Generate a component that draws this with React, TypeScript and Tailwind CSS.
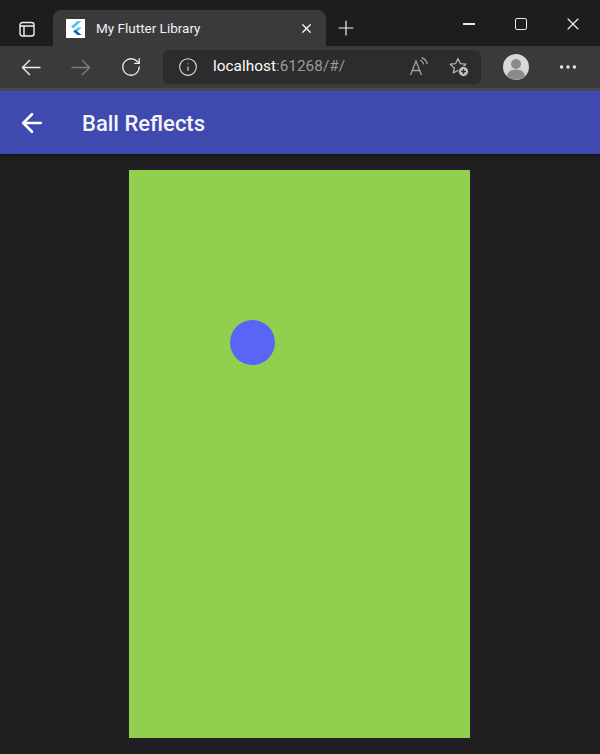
import { ArrowLeft, Info, MoreHorizontal, Plus, RotateCw, X } from 'lucide-react';

const font = { sans: 'font-["Open_Sans","Liberation_Sans",sans-serif]' };

function TabsIcon() {
  return (
    <svg width="16" height="16" viewBox="0 0 16 16" fill="none" stroke="#f0f0f0" strokeWidth="1.4">
      <rect x="1" y="1.5" width="14" height="13.5" rx="2.5" />
      <path d="M1 5h14M5 5v10" />
    </svg>
  );
}

function FlutterLogo() {
  return (
    <svg width="12" height="14" viewBox="0 0 12 14">
      <path d="M7.5 0H11.5L3.2 7.5 1 5.6Z" fill="#4fc3f7" />
      <path d="M7.4 6.5h4.1L7.5 10.4 5.4 8.4Z" fill="#4fc3f7" />
      <path d="M5.4 8.4 7.5 10.4 11.5 14H7.5L3.3 10.4Z" fill="#0d5fa8" />
    </svg>
  );
}

function ToolbarArrow({ color, flip }: { color: string; flip?: boolean }) {
  return (
    <svg width="20" height="17" viewBox="0 0 20 17" fill="none" stroke={color} strokeWidth="1.4" className={flip ? 'rotate-180' : ''}>
      <path d="M1.5 8.5H19.5M9 1 1.5 8.5 9 16" />
    </svg>
  );
}

function ReadAloudIcon() {
  return (
    <svg width="20" height="20" viewBox="0 0 20 20" fill="none" stroke="#a2a2a2" strokeWidth="1.3">
      <path d="M1.5 18 7 4l5.5 14M3.4 13.5h7.2" />
      <path d="M11 3c2 .8 3.2 2.3 3.6 4.3M12.6 .6c3 1 5 3.4 5.6 6.6" />
    </svg>
  );
}

function FavoriteAddIcon() {
  return (
    <svg width="22" height="20" viewBox="0 0 22 20" fill="none">
      <path
        d="M10 1.5 12.3 6.6 17.8 7.2 13.7 10.9 14.8 16 10 13.4 5.2 16 6.4 10.9 2.2 7.2 7.7 6.6Z"
        stroke="#b0b0b0"
        strokeWidth="1.3"
        strokeLinejoin="round"
      />
      <circle cx="15.5" cy="14.5" r="5" fill="#c4c4c4" stroke="#333335" strokeWidth="1" />
      <path d="M15.5 12v5M13 14.5h5" stroke="#2d2d2f" strokeWidth="1.3" />
    </svg>
  );
}

function Avatar() {
  return (
    <svg width="26" height="26" viewBox="0 0 26 26">
      <circle cx="13" cy="13" r="13" fill="#d8d8d8" />
      <circle cx="13" cy="10" r="5" fill="#8b8b8b" />
      <path d="M3.8 22c1-4.5 4.6-6.5 9.2-6.5s8.2 2 9.2 6.5a13 13 0 0 1-18.4 0Z" fill="#8b8b8b" />
    </svg>
  );
}

export default function App() {
  return (
    <div className={`flex h-[754px] w-[600px] flex-col overflow-hidden bg-[#201f21] ${font.sans}`}>
      {/* window title bar */}
      <div className="flex h-[46px] items-end bg-[#1d1d1f]">
        <div className="flex h-[36px] w-[53px] items-center justify-center pt-[1px]">
          <TabsIcon />
        </div>
        <div className="flex h-[36px] w-[273px] items-center rounded-t-lg bg-[#3a393c] pl-[13px] pr-[12px]">
          <div className="flex h-[19px] w-[19px] items-center justify-center bg-white">
            <FlutterLogo />
          </div>
          <span className="ml-[11px] flex-1 font-['Roboto',sans-serif] text-[13.5px] text-[#f2f2f2]">My Flutter Library</span>
          <X size={15} strokeWidth={2} className="text-white" />
        </div>
        <div className="flex h-[36px] w-[40px] items-center justify-center">
          <Plus size={24} strokeWidth={1.2} className="text-[#f0f0f0]" />
        </div>
        <div className="ml-auto flex h-full items-start pt-[14px] pr-[17px]">
          <div className="mr-[40px] mt-[9px] h-[1.5px] w-[12px] bg-[#e8e8e8]" />
          <div className="mr-[36px] mt-[4px] h-[12px] w-[12px] rounded-[2px] border-[1.5px] border-[#e8e8e8]" />
          <X size={20} strokeWidth={1.4} className="text-[#f0f0f0]" />
        </div>
      </div>

      {/* browser toolbar */}
      <div className="flex h-[45px] items-center border-b-[3px] border-[#4a4a4a] bg-[#3a393c]">
        <div className="ml-[21px]">
          <ToolbarArrow color="#f0f0f0" />
        </div>
        <div className="ml-[30px]">
          <ToolbarArrow color="#7d7d7d" flip />
        </div>
        <RotateCw size={22} strokeWidth={1.4} className="ml-[29px] text-[#f0f0f0]" />
        <div className="ml-[21px] flex h-[34px] w-[318px] items-center rounded-md bg-[#2c2c2e] pl-[15px]">
          <Info size={20} strokeWidth={1.3} className="text-[#e4e4e4]" />
          <span className="ml-[15px] font-['Roboto',sans-serif] text-[15.4px] text-white">
            localhost<span className="text-[#9a9a9a]">:61268/#/</span>
          </span>
          <div className="ml-auto flex items-center gap-[19px] pr-[11px]">
            <ReadAloudIcon />
            <FavoriteAddIcon />
          </div>
        </div>
        <div className="ml-[22px]">
          <Avatar />
        </div>
        <MoreHorizontal size={22} strokeWidth={1.6} className="ml-[28px] text-[#f0f0f0]" />
      </div>

      {/* flutter app bar */}
      <div className="flex h-[63px] items-center bg-[#3f4ab0] shadow-[0_2px_3px_rgba(0,0,0,0.35)]">
        <ArrowLeft size={30} strokeWidth={2.1} className="ml-[17px] text-white" />
        <span className="ml-[35px] pt-[2px] font-['Roboto',sans-serif] text-[22px] font-medium text-[#f4f4f8]">Ball Reflects</span>
      </div>

      {/* canvas */}
      <div className="flex flex-1 justify-center pr-px pt-[16px]">
        <div className="relative h-[568px] w-[341px] bg-[#91d04f]">
          <div className="absolute left-[100.5px] top-[150px] h-[45px] w-[45px] rounded-full bg-[#5a64f5]" />
        </div>
      </div>
    </div>
  );
}
